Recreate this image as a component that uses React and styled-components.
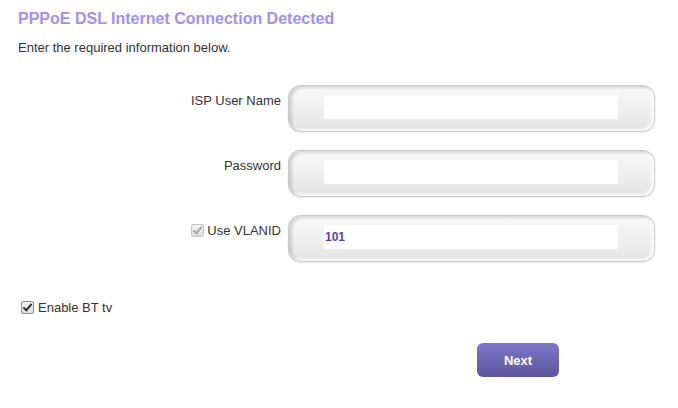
import React from 'react';
import styled, { createGlobalStyle } from 'styled-components';

const GlobalStyle = createGlobalStyle`
  html, body {
    margin: 0;
    padding: 0;
    background: #ffffff;
  }
  body {
    font-family: "Liberation Sans", Arial, sans-serif;
    color: #333333;
  }
`;

const Page = styled.div`
  width: 678px;
  height: 408px;
  padding: 9px 0 0 18px;
  box-sizing: border-box;
`;

const Title = styled.h1`
  margin: 0;
  font-size: 16px;
  line-height: 19px;
  font-weight: bold;
  color: #9e91f2;
`;

const Intro = styled.p`
  margin: 12px 0 0;
  font-size: 13px;
  line-height: 15px;
  color: #333333;
`;

const Form = styled.div`
  display: grid;
  grid-template-columns: 263px 367px;
  column-gap: 7px;
  row-gap: 18px;
  margin-top: 30px;
`;

const Label = styled.label`
  display: flex;
  justify-content: flex-end;
  align-items: center;
  gap: 3px;
  padding-top: 7px;
  height: 16px;
  font-size: 13px;
  color: #333333;
`;

const Check = styled.input.attrs({ type: 'checkbox' })`
  appearance: none;
  position: relative;
  box-sizing: border-box;
  width: 13px;
  height: 13px;
  margin: 0;
  border: 1px solid ${(p) => (p.disabled ? '#c4c4c4' : '#8e8e8e')};
  border-radius: 2px;
  background: linear-gradient(#f4f4f4, #dcdcdc);
  &:checked::after {
    content: '';
    position: absolute;
    left: 3px;
    top: 0px;
    width: 3px;
    height: 7px;
    border: solid ${(p) => (p.disabled ? '#a8a8a8' : '#2f2f2f')};
    border-width: 0 2px 2px 0;
    transform: rotate(40deg);
  }
`;

const Field = styled.div`
  box-sizing: border-box;
  height: 47px;
  padding: 9px 0 0 35px;
  border: 1px solid #c9c9c9;
  border-radius: 12px;
  background: linear-gradient(#f9f9f9, #ebebeb 70%, #e2e2e2);
  box-shadow: inset 3px 2px 3px rgba(0, 0, 0, 0.14),
    inset -2px -2px 3px rgba(255, 255, 255, 0.9),
    0 1px 2px rgba(0, 0, 0, 0.08);
`;

const TextInput = styled.input`
  box-sizing: border-box;
  width: 294px;
  height: 24px;
  border: none;
  outline: none;
  background: #ffffff;
  padding: 0 0 0 1px;
  font-family: "Liberation Sans", Arial, sans-serif;
  font-size: 12px;
  font-weight: bold;
  color: #5b3fb0;
`;

const Option = styled.label`
  display: flex;
  align-items: center;
  gap: 4px;
  margin: 38px 0 0 3px;
  font-size: 13px;
  color: #333333;
`;

const Actions = styled.div`
  display: flex;
  justify-content: flex-start;
  padding-left: 459px;
  margin-top: 28px;
`;

const NextButton = styled.button`
  width: 82px;
  height: 34px;
  border: none;
  border-radius: 6px;
  background: linear-gradient(#7d77c9, #5d559d);
  color: #ffffff;
  font-family: "Liberation Sans", Arial, sans-serif;
  font-size: 13px;
  font-weight: bold;
  cursor: pointer;
`;

export default function App() {
  return (
    <Page>
      <GlobalStyle />
      <Title>PPPoE DSL Internet Connection Detected</Title>
      <Intro>Enter the required information below.</Intro>
      <Form>
        <Label>ISP User Name</Label>
        <Field>
          <TextInput type="text" />
        </Field>
        <Label>Password</Label>
        <Field>
          <TextInput type="password" />
        </Field>
        <Label>
          <Check checked disabled readOnly />
          Use VLANID
        </Label>
        <Field>
          <TextInput type="text" defaultValue="101" />
        </Field>
      </Form>
      <Option>
        <Check defaultChecked />
        Enable BT tv
      </Option>
      <Actions>
        <NextButton>Next</NextButton>
      </Actions>
    </Page>
  );
}
